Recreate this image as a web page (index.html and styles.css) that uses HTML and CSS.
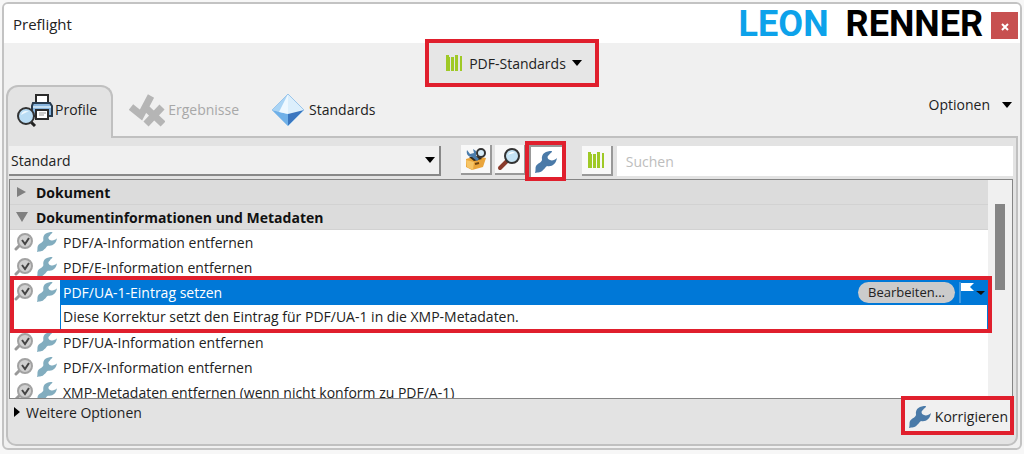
FILE: index.html
```html
<!DOCTYPE html>
<html lang="de">
<head>
  <meta charset="UTF-8" />
  <meta name="viewport" content="width=device-width, initial-scale=1.0" />
  <title>Preflight</title>
  <link rel="stylesheet" href="styles.css">
</head>
<body>

  <!-- Shared icons -->
  <svg class="icon-defs" aria-hidden="true">
    <symbol id="wrench" viewBox="0 0 22 22">
      <path d="M17 0C11 0 6 2 7 9C6 12 3 12 1 15C0 17 1 19 0 22C3 21 6 22 8 19C10 18 10 16 12 15C17 16 21 13 22 7C20 9 17 10 15 9C12 8 12 5 14 4C15 2 17 2 17 0Z" />
    </symbol>
    <symbol id="books" viewBox="0 0 18 18">
      <path d="M1 1h3v2h1v14h-4zM6 3h3v14h-3zM10 1h3v16h-3zM15 2h2v15h-2z" />
    </symbol>
    <symbol id="check" viewBox="0 0 20 18">
      <path d="M6 12L2 16" stroke="#999" stroke-width="3" stroke-linecap="round" />
      <circle cx="11" cy="8" r="7" fill="#d0d0d0" stroke="#a2a2a2" stroke-width="2" />
      <path d="M8 7l3 4l4-6" fill="none" stroke="#444" stroke-width="2" />
    </symbol>
    <symbol id="arrow" viewBox="0 0 10 6">
      <path d="M0 0h10L5 6z" />
    </symbol>
  </svg>

  <div class="window">
    <header class="titlebar">
      <h1>Preflight</h1>
      <div class="brand"><span class="first">LEON</span><span>RENNER</span></div>
      <button class="close" aria-label="Schließen">
        <svg viewBox="0 0 8 8"><path d="M1 1l6 6M7 1l-6 6" /></svg>
      </button>
    </header>

    <div class="library">
      <button class="library-btn marked">
        <svg class="books"><use href="#books" /></svg>
        PDF-Standards
        <svg class="arrow"><use href="#arrow" /></svg>
      </button>
    </div>

    <nav class="tabs">
      <button class="tab active">
        <svg class="printer" viewBox="0 0 37 34">
          <path d="M20 2h12v9h-12z" fill="#fff" stroke="#2b2b2b" stroke-width="2" />
          <path d="M17 10h17l2 3v10h-20v-10z" fill="#86b3dc" stroke="#26394c" stroke-width="2" />
          <path d="M17 14h18" stroke="#c5dff3" stroke-width="2" />
          <path d="M20 17h12v9h-12z" fill="#fff" stroke="#2b2b2b" stroke-width="2" />
          <path d="M23 20h7M23 22h5" stroke="#999" />
          <path d="M14 28l5 5" stroke="#222" stroke-width="3" />
          <circle cx="10" cy="23" r="8" fill="#b9dcf4" stroke="#333" stroke-width="2" />
          <path d="M5 22c1-4 5-5 8-3c-4 0-5 2-8 3z" fill="#eef8ff" />
        </svg>
        Profile
      </button>
      <button class="tab results" disabled>
        <svg class="marks" viewBox="0 0 36 34">
          <path d="M2 14l10 8L22 3" />
          <path d="M17 15l17 16M33 14L17 31" />
        </svg>
        Ergebnisse
      </button>
      <button class="tab standards">
        <svg class="gem" viewBox="0 0 34 34">
          <path d="M17 1L1 17l16 4z" fill="#a9d4f5" />
          <path d="M17 1l16 16l-16 4z" fill="#dceffc" />
          <path d="M1 17l16 16v-12z" fill="#6fb0e8" />
          <path d="M33 17L17 33v-12z" fill="#3a76bf" />
          <path d="M17 1v20L8 19z" fill="#eef8ff" />
          <path d="M17 1L1 17l16 16l16-16z" fill="none" stroke="#9cc6ea" />
        </svg>
        Standards
      </button>
      <button class="options">
        Optionen
        <svg class="arrow"><use href="#arrow" /></svg>
      </button>
    </nav>

    <main class="panel">
      <div class="toolbar">
        <div class="select-wrap">
          <select aria-label="Bibliothek">
            <option>Standard</option>
          </select>
          <svg class="arrow"><use href="#arrow" /></svg>
        </div>
        <div class="tools">
          <button class="tool" aria-label="Profile">
            <svg viewBox="0 0 24 24">
              <path d="M3 12l10-3l10 2l-3 9l-11 3l-6-3z" fill="#e9a43a" />
              <path d="M3 13l8 2l-1 8l-6-3z" fill="#f6c566" />
              <path d="M6 10l10-1l3 3l-8 2z" fill="#33291c" />
              <path d="M4 3l3 4l4-1l-1-4l3 2v5l3 3l-2 2l-5-4c-4 0-6-3-5-7z" fill="#4b7cab" />
              <circle cx="18" cy="6" r="4" fill="#d6ecf8" stroke="#333" stroke-width="2" />
              <path d="M12 17l4-1" stroke="#704510" stroke-width="2" />
            </svg>
          </button>
          <button class="tool" aria-label="Prüfungen">
            <svg viewBox="0 0 24 24">
              <path d="M10 14l-7 7" stroke="#8a3b2c" stroke-width="4" stroke-linecap="round" />
              <circle cx="15" cy="9" r="7" fill="#c4e3f4" stroke="#333" stroke-width="2" />
              <path d="M11 8c1-3 5-4 7-2c-3 0-5 1-7 2z" fill="#fff" />
            </svg>
          </button>
          <button class="tool pressed marked" aria-label="Korrekturen">
            <svg class="wrench"><use href="#wrench" /></svg>
          </button>
        </div>
        <button class="tool" aria-label="PDF-Standards">
          <svg class="books"><use href="#books" /></svg>
        </button>
        <input class="search" type="text" placeholder="Suchen" aria-label="Suchen">
      </div>

      <div class="list">
        <ul class="rows">
          <li class="group"><svg viewBox="0 0 12 12"><path d="M1 1l9 5l-9 5z" /></svg>Dokument</li>
          <li class="group"><svg viewBox="0 0 12 12"><path d="M0 1h12L6 11z" /></svg>Dokumentinformationen und Metadaten</li>
          <li class="row">
            <svg class="check"><use href="#check" /></svg>
            <svg class="fix"><use href="#wrench" /></svg>
            <span class="name">PDF/A-Information entfernen</span>
          </li>
          <li class="row">
            <svg class="check"><use href="#check" /></svg>
            <svg class="fix"><use href="#wrench" /></svg>
            <span class="name">PDF/E-Information entfernen</span>
          </li>
          <li class="row selected">
            <svg class="check"><use href="#check" /></svg>
            <svg class="fix"><use href="#wrench" /></svg>
            <div class="details">
              <div class="details-head">
                <span>PDF/UA-1-Eintrag setzen</span>
                <button class="edit">Bearbeiten...</button>
                <button class="flag" aria-label="Markierung">
                  <svg viewBox="0 0 28 24">
                    <path d="M1 1v21" stroke="#7fb6e8" />
                    <path d="M2 2h13l-4 4l4 4h-13z" fill="#fff" />
                    <path d="M17 10h9l-4 4z" fill="#111" />
                  </svg>
                </button>
              </div>
              <p>Diese Korrektur setzt den Eintrag für PDF/UA-1 in die XMP-Metadaten.</p>
            </div>
          </li>
          <li class="row">
            <svg class="check"><use href="#check" /></svg>
            <svg class="fix"><use href="#wrench" /></svg>
            <span class="name">PDF/UA-Information entfernen</span>
          </li>
          <li class="row">
            <svg class="check"><use href="#check" /></svg>
            <svg class="fix"><use href="#wrench" /></svg>
            <span class="name">PDF/X-Information entfernen</span>
          </li>
          <li class="row">
            <svg class="check"><use href="#check" /></svg>
            <svg class="fix"><use href="#wrench" /></svg>
            <span class="name">XMP-Metadaten entfernen (wenn nicht konform zu PDF/A-1)</span>
          </li>
        </ul>
        <div class="scrollbar"><div class="thumb"></div></div>
      </div>

      <footer class="footer">
        <button class="more">
          <svg viewBox="0 0 6 10"><path d="M0 0l6 5l-6 5z" /></svg>
          Weitere Optionen
        </button>
        <button class="repair marked">
          <svg class="wrench"><use href="#wrench" /></svg>
          Korrigieren
        </button>
      </footer>
    </main>
  </div>

</body>
</html>
```
FILE: styles.css
```css
/* Base Styles */
* {
  box-sizing: border-box;
  margin: 0;
  padding: 0;
}

body {
  height: 100vh;
  padding: 2px 2px 4px;
  background: #f7f7f7;
  font-family: 'Open Sans', 'Noto Sans', sans-serif;
  font-size: 14px;
  color: #222;
}

button,
input,
select {
  font: inherit;
  color: inherit;
  border: none;
  background: none;
}

svg {
  flex-shrink: 0;
}

.icon-defs {
  display: none;
}

.arrow {
  width: 10px;
  height: 6px;
  fill: #000;
}

.books {
  width: 18px;
  height: 18px;
  fill: #9fc926;
}

.wrench {
  width: 22px;
  height: 22px;
  fill: #4a7aa8;
}

/* Red frame around the controls of each step */
.marked {
  outline: 4px solid #e01f2d;
  position: relative;
  z-index: 1;
}

.window {
  display: flex;
  flex-direction: column;
  height: 100%;
  background: #f0f0f0;
  border: 2px solid #c3c3c3;
  border-radius: 6px;
  padding: 0 2px 2px;
}

/* Title bar */
.titlebar {
  display: flex;
  align-items: center;
  height: 39px;
  margin: 0 -2px;
  padding-left: 9px;
  background: #fff;
  border-radius: 4px 4px 0 0;
}

.titlebar h1 {
  flex: 1;
  font-size: 15px;
  font-weight: normal;
}

.brand {
  display: flex;
  gap: 17px;
  padding-top: 2px;
  font-family: Roboto, sans-serif;
  font-size: 36px;
  font-weight: bold;
  line-height: 37px;
  color: #000;
}

.brand .first {
  color: #0da2ea;
}

.close {
  width: 27px;
  height: 27px;
  margin: 4px 2px 0 8px;
  background: #c75050;
}

.close svg {
  width: 8px;
  height: 8px;
  stroke: #fff;
  stroke-width: 2;
}

.library {
  display: flex;
  justify-content: center;
  height: 42px;
}

.library-btn {
  display: flex;
  align-items: center;
  gap: 6px;
  height: 40px;
  padding: 0 13px 0 16px;
  background: #e6e6e6;
}

/* Tabs */
.tabs {
  display: flex;
  height: 51px;
}

.tab {
  display: flex;
  align-items: center;
  gap: 4px;
  padding: 0 14px 2px 10px;
}

.tab.active {
  height: 53px;
  gap: 2px;
  padding: 0 14px 6px 8px;
  background: #e3e3e3;
  border: 2px solid #c0c0c0;
  border-bottom: none;
  border-radius: 12px 12px 0 0;
  position: relative;
}

.tab.results {
  margin-left: 6px;
  gap: 3px;
  color: #a8a8a8;
}

.tab.standards {
  margin-left: 8px;
}

.printer {
  width: 37px;
  height: 34px;
}

.marks {
  width: 36px;
  height: 34px;
  fill: none;
  stroke: #b5b5b5;
  stroke-width: 7;
}

.gem {
  width: 34px;
  height: 34px;
}

.options {
  display: flex;
  align-items: center;
  gap: 12px;
  margin-left: auto;
  padding: 0 6px 12px 0;
}

/* Panel */
.panel {
  flex: 1;
  min-height: 0;
  display: flex;
  flex-direction: column;
  padding: 8px 3px 0 1px;
  background: #e3e3e3;
  border: 2px solid #c0c0c0;
  border-radius: 0 0 10px 10px;
}

.toolbar {
  display: flex;
  align-items: center;
  height: 30px;
  margin-bottom: 3px;
}

.select-wrap {
  display: flex;
  align-items: center;
  width: 43%;
  height: 30px;
  background: #f0f0f0;
  border-right: 2px solid #888;
  border-bottom: 2px solid #888;
}

.select-wrap select {
  flex: 1;
  height: 28px;
  padding-left: 2px;
  appearance: none;
}

.select-wrap .arrow {
  margin: 0 4px 0 -14px;
  pointer-events: none;
}

.tools {
  display: flex;
  gap: 3px;
  margin: 0 20px;
}

.tool {
  display: flex;
  align-items: center;
  justify-content: center;
  width: 31px;
  height: 30px;
  background: #f8f8f8;
  border-right: 2px solid #999;
  border-bottom: 2px solid #999;
}

.tool svg {
  width: 24px;
  height: 24px;
}

.tool .wrench {
  width: 22px;
  height: 22px;
}

.tool .books {
  width: 20px;
  height: 18px;
}

.tool.pressed {
  height: 32px;
  width: 33px;
  background: #fff;
  border: none;
  border-top: 2px solid #999;
  border-left: 2px solid #999;
}

.search {
  flex: 1;
  min-width: 0;
  height: 30px;
  margin-left: 4px;
  padding: 0 9px;
  background: #fff;
}

.search::placeholder {
  color: #bdbdbd;
}

/* List of fixups */
.list {
  flex: 1;
  min-height: 0;
  display: flex;
  background: #fff;
  border: 1px solid #858585;
  overflow: hidden;
}

.rows {
  flex: 1;
  list-style: none;
}

.group {
  display: flex;
  align-items: center;
  gap: 8px;
  height: 25px;
  padding-left: 6px;
  background: #dcdcdc;
  border-bottom: 1px solid #d2d2d2;
  font-weight: bold;
  color: #111;
}

.group svg {
  width: 12px;
  height: 12px;
  fill: #808080;
}

.row {
  display: flex;
  align-items: flex-start;
  line-height: 25px;
}

.check {
  width: 20px;
  height: 18px;
  margin: 3px 2px 0 4px;
}

.fix {
  width: 22px;
  height: 20px;
  margin-top: 2px;
  fill: #82adbf;
}

.name {
  padding-left: 5px;
}

.selected {
  position: relative;
  z-index: 1;
}

.selected::after {
  content: "";
  position: absolute;
  inset: -4px -4px -3px 0;
  border: 4px solid #e01f2d;
  pointer-events: none;
}

.details {
  flex: 1;
  margin-left: 2px;
  border: 1px solid #0078d7;
  border-top: none;
}

.details-head {
  display: flex;
  align-items: center;
  height: 25px;
  padding-left: 2px;
  background: #0078d7;
  color: #fff;
}

.details-head span {
  flex: 1;
}

.edit {
  height: 21px;
  padding: 0 10px;
  border-radius: 11px;
  background: #cbcbcb;
  color: #222;
  font-size: 13px;
  line-height: 21px;
}

.flag {
  width: 28px;
  height: 24px;
  margin-left: 4px;
}

.flag svg {
  display: block;
  width: 28px;
  height: 24px;
}

.details p {
  height: 24px;
  padding-left: 2px;
  line-height: 24px;
}

.scrollbar {
  width: 24px;
  padding: 24px 7px 0;
  background: #f0f0f0;
}

.thumb {
  height: 86px;
  background: #858585;
}

/* Footer */
.footer {
  display: flex;
  align-items: flex-start;
  justify-content: space-between;
  height: 45px;
}

.more {
  display: flex;
  align-items: center;
  gap: 6px;
  height: 26px;
  padding-left: 5px;
}

.more svg {
  width: 6px;
  height: 10px;
}

.repair {
  display: flex;
  align-items: center;
  gap: 4px;
  height: 31px;
  margin: 1px 3px 0 0;
  padding: 2px 2px 0 4px;
  background: #f0f0f0;
}
```
